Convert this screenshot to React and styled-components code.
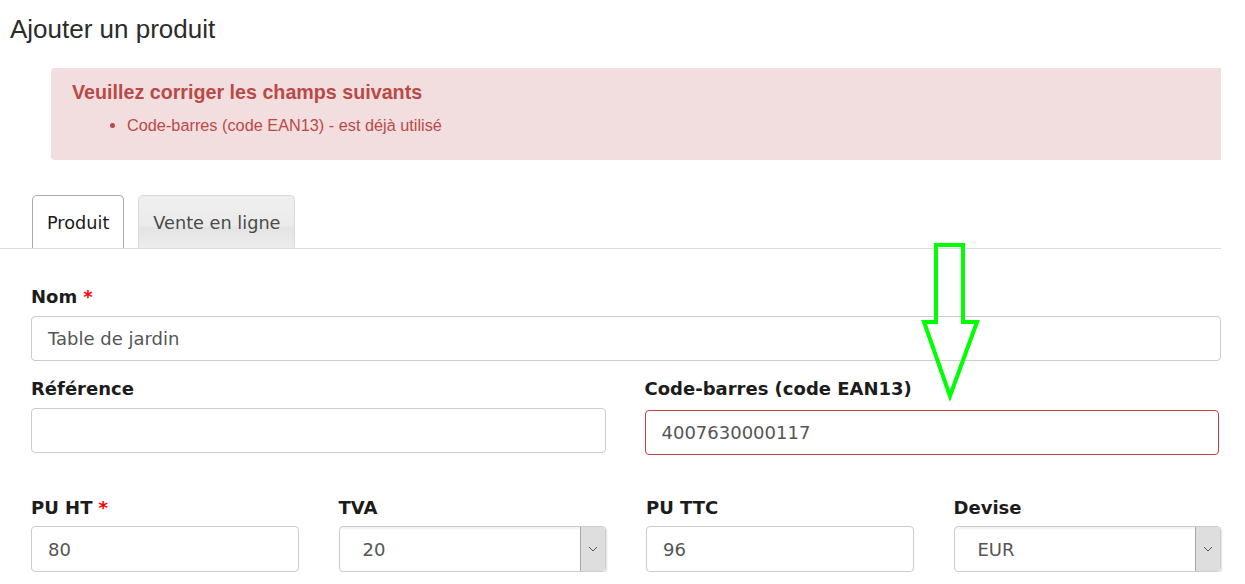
import styled, { createGlobalStyle } from 'styled-components'

const GlobalStyle = createGlobalStyle`
body {
  margin: 0;
  background: #fff;
  font-family: "DejaVu Sans", Verdana, sans-serif;
  overflow: hidden;
}
`

const Page = styled.div`
position: relative;
width: 1221px;
padding-top: 14px;
`

const Title = styled.h1`
margin: 0 0 0 10px;
font-family: "Liberation Sans", Arial, sans-serif;
font-weight: normal;
font-size: 26px;
line-height: 30px;
color: #2b2b2b;
`

const Alert = styled.div`
margin: 24px 0 0 51px;
padding: 13px 20px 26px 21px;
background: #f2dede;
border-radius: 4px 0 0 4px;
color: #b94a48;
font-family: "Liberation Sans", Arial, sans-serif;
`

const AlertHeading = styled.h4`
margin: 0;
font-size: 19.7px;
line-height: 22px;
font-weight: bold;
`

const AlertList = styled.ul`
margin: 14px 0 0;
padding-left: 55px;
font-size: 16.3px;
line-height: 17px;
`

const TabBar = styled.div`
display: flex;
gap: 14px;
margin-top: 35px;
padding-left: 32px;
border-bottom: 1px solid #dcdcdc;
`

const Tab = styled.div`
height: 53px;
padding: 1px 14px 0;
display: flex;
align-items: center;
box-sizing: border-box;
border: 1px solid ${p => (p.$active ? '#a9a9a9' : '#dadada')};
border-bottom: none;
border-radius: 5px 5px 0 0;
font-size: 17.7px;
color: ${p => (p.$active ? '#1a1a1a' : '#4a4a4a')};
background: ${p =>
  p.$active
    ? '#fff'
    : 'linear-gradient(to bottom, #efefef 0%, #ebebeb 55%, #e4e4e4 62%, #ececec 100%)'};
`

const Form = styled.div`
padding-left: 31px;
`

const Row = styled.div`
display: grid;
grid-template-columns: repeat(${p => p.$cols}, 1fr);
column-gap: ${p => (p.$cols === 2 ? '39px' : '40px')};
padding-right: ${p => (p.$cols === 2 ? '2px' : '0')};
margin-top: ${p => p.$top}px;
`

const Field = styled.div`
display: flex;
flex-direction: column;
`

const Label = styled.label`
font-weight: bold;
font-size: 18px;
line-height: 20px;
color: #1c1c1c;
margin-bottom: ${p => p.$gap || 9}px;
`

const Star = styled.span`
color: #f00;
margin-left: 6px;
`

const Input = styled.div`
height: ${p => p.$h || 45}px;
box-sizing: border-box;
border: 1px solid ${p => (p.$invalid ? '#c33f3f' : '#cccccc')};
border-radius: 4px;
padding-left: 16px;
display: flex;
align-items: center;
font-size: 18px;
color: #555;
margin-top: ${p => (p.$invalid ? 2 : 0)}px;
`

const Select = styled.div`
height: 46px;
box-sizing: border-box;
border: 1px solid #cccccc;
border-radius: 4px;
display: flex;
align-items: stretch;
font-size: 18px;
color: #555;
box-shadow: 1px 1px 2px rgba(0, 0, 0, 0.12);
overflow: hidden;
`

const SelectValue = styled.div`
flex: 1;
display: flex;
align-items: center;
padding-left: 23px;
box-shadow: inset 0 2px 2px rgba(0, 0, 0, 0.05);
`

const SelectButton = styled.div`
width: 24px;
background: #dedede;
border-left: 1px solid #a8a8a8;
display: flex;
align-items: center;
justify-content: center;
`

const Pointer = styled.svg`
position: absolute;
left: 920px;
top: 243px;
pointer-events: none;
`

function Chevron() {
  return (
    <svg width="10" height="6" viewBox="0 0 10 6">
      <polyline points="1,1 5,5 9,1" fill="none" stroke="#555" strokeWidth="1" />
    </svg>
  )
}

function Dropdown({ value }) {
  return (
    <Select>
      <SelectValue>{value}</SelectValue>
      <SelectButton>
        <Chevron />
      </SelectButton>
    </Select>
  )
}

export default function App() {
  return (
    <Page>
      <GlobalStyle />
      <Title>Ajouter un produit</Title>

      <Alert>
        <AlertHeading>Veuillez corriger les champs suivants</AlertHeading>
        <AlertList>
          <li>Code-barres (code EAN13) - est déjà utilisé</li>
        </AlertList>
      </Alert>

      <TabBar>
        <Tab $active>Produit</Tab>
        <Tab>Vente en ligne</Tab>
      </TabBar>

      <Form>
        <Row $cols={1} $top={38}>
          <Field>
            <Label $gap={9}>
              Nom<Star>*</Star>
            </Label>
            <Input>Table de jardin</Input>
          </Field>
        </Row>

        <Row $cols={2} $top={18}>
          <Field>
            <Label $gap={9}>Référence</Label>
            <Input></Input>
          </Field>
          <Field>
            <Label $gap={9}>Code-barres (code EAN13)</Label>
            <Input $invalid>4007630000117</Input>
          </Field>
        </Row>

        <Row $cols={4} $top={43}>
          <Field>
            <Label $gap={8}>
              PU HT<Star>*</Star>
            </Label>
            <Input $h={46}>80</Input>
          </Field>
          <Field>
            <Label $gap={8}>TVA</Label>
            <Dropdown value="20" />
          </Field>
          <Field>
            <Label $gap={8}>PU TTC</Label>
            <Input $h={46}>96</Input>
          </Field>
          <Field>
            <Label $gap={8}>Devise</Label>
            <Dropdown value="EUR" />
          </Field>
        </Row>
      </Form>

      <Pointer width="62" height="160" viewBox="0 0 62 160">
        <polygon
          points="16,2 43,2 43,79 57,79 30,153 4,79 16,79"
          fill="none"
          stroke="#00ff00"
          strokeWidth="4"
        />
      </Pointer>
    </Page>
  )
}
